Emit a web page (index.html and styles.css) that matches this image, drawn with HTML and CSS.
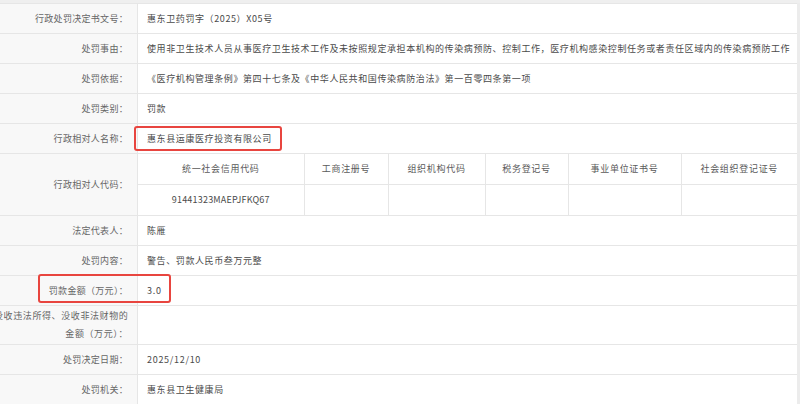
FILE: index.html
```html
<!DOCTYPE html>
<html lang="zh-CN">
<head>
    <meta charset="UTF-8">
    <meta name="viewport" content="width=device-width, initial-scale=1.0">
    <title>行政处罚信息</title>
    <link rel="stylesheet" href="styles.css">
</head>
<body>
    <div class="page">
        <table class="detail">
            <colgroup>
                <col class="col-label">
                <col>
            </colgroup>
            <tbody>
                <tr>
                    <td class="label">行政处罚决定书文号：</td>
                    <td class="value">惠东卫药罚字（2025）X05号</td>
                </tr>
                <tr>
                    <td class="label">处罚事由：</td>
                    <td class="value nowrap">使用非卫生技术人员从事医疗卫生技术工作及未按照规定承担本机构的传染病预防、控制工作，医疗机构感染控制任务或者责任区域内的传染病预防工作</td>
                </tr>
                <tr>
                    <td class="label">处罚依据：</td>
                    <td class="value">《医疗机构管理条例》第四十七条及《中华人民共和国传染病防治法》第一百零四条第一项</td>
                </tr>
                <tr>
                    <td class="label">处罚类别：</td>
                    <td class="value">罚款</td>
                </tr>
                <tr>
                    <td class="label">行政相对人名称：</td>
                    <td class="value">惠东县运康医疗投资有限公司</td>
                </tr>
                <tr>
                    <td class="label">行政相对人代码：</td>
                    <td class="value flush">
                        <table class="codes">
                            <colgroup>
                                <col class="c1">
                                <col class="c2">
                                <col class="c3">
                                <col class="c4">
                                <col class="c5">
                                <col>
                            </colgroup>
                            <tr>
                                <td>统一社会信用代码</td>
                                <td>工商注册号</td>
                                <td>组织机构代码</td>
                                <td>税务登记号</td>
                                <td>事业单位证书号</td>
                                <td>社会组织登记证号</td>
                            </tr>
                            <tr>
                                <td class="num">91441323MAEPJFKQ67</td>
                                <td></td>
                                <td></td>
                                <td></td>
                                <td></td>
                                <td></td>
                            </tr>
                        </table>
                    </td>
                </tr>
                <tr>
                    <td class="label">法定代表人：</td>
                    <td class="value">陈雁</td>
                </tr>
                <tr>
                    <td class="label">处罚内容：</td>
                    <td class="value">警告、罚款人民币叁万元整</td>
                </tr>
                <tr>
                    <td class="label">罚款金额（万元）：</td>
                    <td class="value num">3.0</td>
                </tr>
                <tr>
                    <td class="label tall">没收违法所得、没收非法财物的<br>金额（万元）：</td>
                    <td class="value"></td>
                </tr>
                <tr>
                    <td class="label">处罚决定日期：</td>
                    <td class="value num">2025/12/10</td>
                </tr>
                <tr>
                    <td class="label">处罚机关：</td>
                    <td class="value">惠东县卫生健康局</td>
                </tr>
            </tbody>
        </table>

        <!-- annotation boxes drawn over the screenshot -->
        <div class="mark mark-name"></div>
        <div class="mark mark-fine"></div>
    </div>
</body>
</html>
```

FILE: styles.css
```css
body {
    margin: 0;
    padding: 0;
    background: #ffffff;
    font-family: "Noto Sans CJK SC", "Noto Sans", sans-serif;
    overflow: hidden;
}

.page {
    position: relative;
    padding-top: 3px;
    background: #efefef;
    height: 404px;
    box-sizing: border-box;
}

.detail {
    width: calc(100% + 16px);
    margin-left: -16px;
    border-collapse: collapse;
    table-layout: fixed;
    background: #fff;
    border-right: 3px solid #ececec;
}

.col-label {
    width: 153px;
}

.detail > tbody > tr > td {
    border: 1px solid #e6e6e6;
    height: 29px;
    padding: 0 9px;
    font-size: 9px;
    line-height: 18px;
    vertical-align: middle;
}

.label {
    background: #f8f8f8;
    color: #666;
    text-align: right;
    letter-spacing: 0.3px;
    white-space: nowrap;
}

.label.tall {
    padding: 1px 9px;
    letter-spacing: 0.6px;
}

.value {
    color: #4a4a4a;
    letter-spacing: 0.6px;
}

.nowrap {
    white-space: nowrap;
    overflow: hidden;
}

.value.num {
    letter-spacing: 0.7px;
}

.detail > tbody > tr > td.flush {
    padding: 0;
}

.codes {
    width: 100%;
    border-collapse: collapse;
    table-layout: fixed;
    border-style: hidden;
}

.codes .c1 { width: 166px; }
.codes .c2 { width: 84px; }
.codes .c3 { width: 97px; }
.codes .c4 { width: 83px; }
.codes .c5 { width: 113px; }

.codes td {
    border: 1px solid #e6e6e6;
    height: 30px;
    padding: 0;
    text-align: center;
    font-size: 9px;
    color: #5a5a5a;
    letter-spacing: 0.7px;
}

.codes td.num {
    letter-spacing: 0.2px;
    color: #4a4a4a;
}

.mark {
    position: absolute;
    border: 2px solid #e8453f;
    border-radius: 3px;
    box-sizing: border-box;
}

.mark-name {
    left: 134px;
    top: 126px;
    width: 148px;
    height: 25px;
}

.mark-fine {
    left: 38px;
    top: 274px;
    width: 133px;
    height: 29px;
}
```
